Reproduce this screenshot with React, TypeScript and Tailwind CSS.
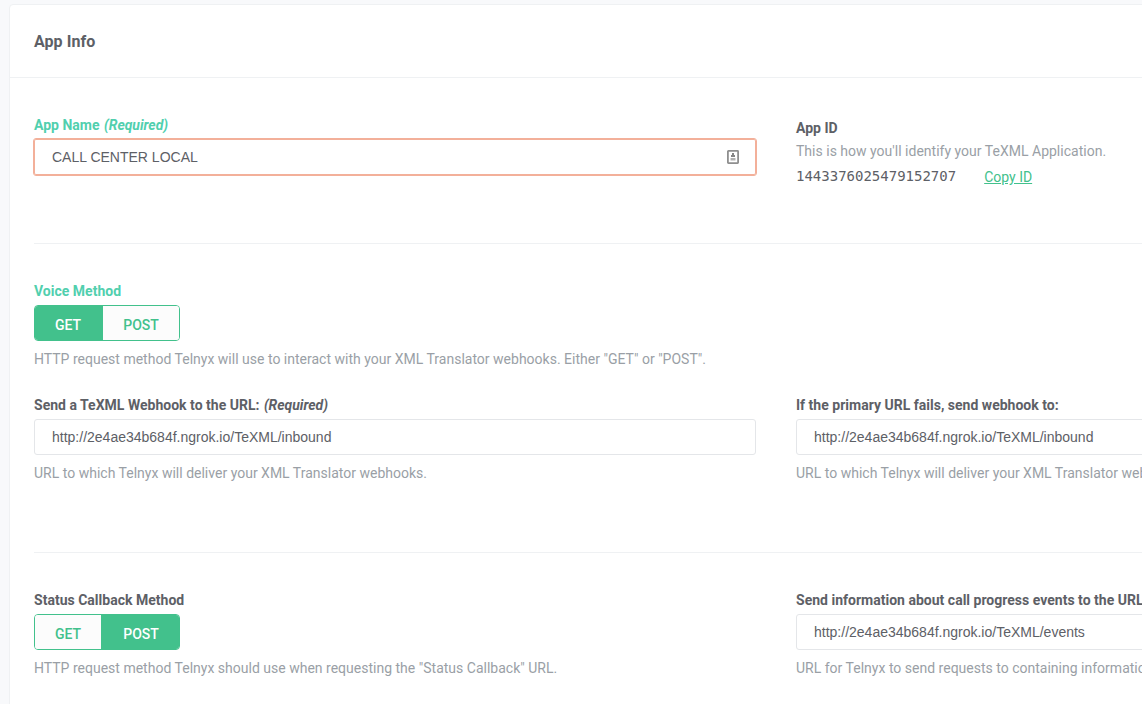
import type { ReactNode } from "react";

function Label({ children, required, active }: { children: ReactNode; required?: boolean; active?: boolean }) {
  return (
    <label className={`block h-5 text-sm leading-5 font-bold tracking-[0.01px] whitespace-nowrap ${active ? "text-[#51cfae]" : "text-[#5d6066]"}`}>
      {children}
      {required && <em className="ml-px tracking-[-0.02px]"> (Required)</em>}
    </label>
  );
}

function Hint({ children }: { children: ReactNode }) {
  return <p className="mt-2 h-5 text-sm leading-5 tracking-[0.006px] whitespace-nowrap text-[#9a9fa6]">{children}</p>;
}

function UrlField({ value }: { value: string }) {
  return (
    <input
      readOnly
      value={value}
      className="mt-1 block h-9 w-full rounded-[3px] border border-[#e4e6e9] bg-white px-[17px] font-['Liberation_Sans',sans-serif] text-sm text-[#5d6066] outline-none"
    />
  );
}

function MethodToggle({ value }: { value: "GET" | "POST" }) {
  const on = "bg-[#42c18c] text-white";
  const off = "bg-[#fcfcfc] text-[#42c18c]";
  return (
    <div className="mt-1 flex h-9 w-[146px] overflow-hidden rounded-[4px] border border-[#42c18c] text-sm font-medium">
      <button className={`pt-1 ${value === "GET" ? `w-[68px] pr-[2px] ${on}` : `w-[66px] ${off}`}`}>GET</button>
      <button className={`flex-1 pt-1 ${value === "POST" ? `pl-[2px] ${on}` : off}`}>POST</button>
    </div>
  );
}

function ContactIcon() {
  return (
    <svg width="12" height="14" viewBox="0 0 12 14" className="shrink-0">
      <rect x="0.9" y="0.9" width="10.2" height="12.2" rx="0.5" fill="#fff" stroke="#8f8f8f" strokeWidth="1.8" />
      <path d="M5 3h2v2h1v2H4V5h1z" fill="#858585" />
      <path d="M3.5 8h5v2.5h-5z" fill="#b0b0b0" />
    </svg>
  );
}

export default function App() {
  return (
    <div className="h-[704px] w-full overflow-hidden bg-[#f8f9fb] pt-1 pl-[9px] font-[Roboto,sans-serif]">
      <main className="h-[800px] w-[1534px] rounded-[4px] border border-[#eff1f3] bg-white">
        <header className="flex h-[73px] items-center border-b border-[#eff1f3] px-6 pt-0.5">
          <h1 className="text-base font-bold tracking-[0.06px] text-[#5d6066]">App Info</h1>
        </header>
        <div className="px-6">
          <section className="grid h-[166px] grid-cols-[722px_722px] gap-x-10 border-b border-[#eff1f3] pt-[37px]">
            <div>
              <Label required active>App Name</Label>
              <div className="mt-1 flex h-9 items-center justify-between rounded-[2px] bg-white pr-[17px] pl-[18px] ring-1 ring-[#f3b09a] ring-inset outline outline-[#f3b09a]">
                <input
                  readOnly
                  value="CALL CENTER LOCAL"
                  className="h-8 flex-1 bg-transparent font-['Liberation_Sans',sans-serif] text-sm text-[#5d6066] outline-none"
                />
                <ContactIcon />
              </div>
            </div>
            <div className="pt-[3px]">
              <Label>App ID</Label>
              <p className="mt-[3px] text-sm leading-5 tracking-[0.01px] text-[#9a9fa6]">This is how you'll identify your TeXML Application.</p>
              <div className="mt-1.5 flex gap-7 text-sm leading-5">
                <span className="-mt-px font-['DejaVu_Sans_Mono',monospace] text-[#5d6066]">1443376025479152707</span>
                <a className="text-[#42c18c] underline">Copy ID</a>
              </div>
            </div>
          </section>
          <section className="h-[309px] border-b border-[#eff1f3] pt-[37px]">
            <Label active>Voice Method</Label>
            <MethodToggle value="GET" />
            <Hint>HTTP request method Telnyx will use to interact with your XML Translator webhooks. Either "GET" or "POST".</Hint>
            <div className="mt-[26px] grid grid-cols-[722px_722px] gap-x-10">
              <div>
                <Label required>Send a TeXML Webhook to the URL:</Label>
                <UrlField value="http://2e4ae34b684f.ngrok.io/TeXML/inbound" />
                <Hint>URL to which Telnyx will deliver your XML Translator webhooks.</Hint>
              </div>
              <div>
                <Label>If the primary URL fails, send webhook to:</Label>
                <UrlField value="http://2e4ae34b684f.ngrok.io/TeXML/inbound" />
                <Hint>URL to which Telnyx will deliver your XML Translator webhooks.</Hint>
              </div>
            </div>
          </section>
          <section className="grid grid-cols-[722px_722px] gap-x-10 pt-[37px]">
            <div>
              <Label>Status Callback Method</Label>
              <MethodToggle value="POST" />
              <Hint>HTTP request method Telnyx should use when requesting the "Status Callback" URL.</Hint>
            </div>
            <div>
              <Label>Send information about call progress events to the URL:</Label>
              <UrlField value="http://2e4ae34b684f.ngrok.io/TeXML/events" />
              <Hint>URL for Telnyx to send requests to containing information about call progress events.</Hint>
            </div>
          </section>
        </div>
      </main>
    </div>
  );
}
